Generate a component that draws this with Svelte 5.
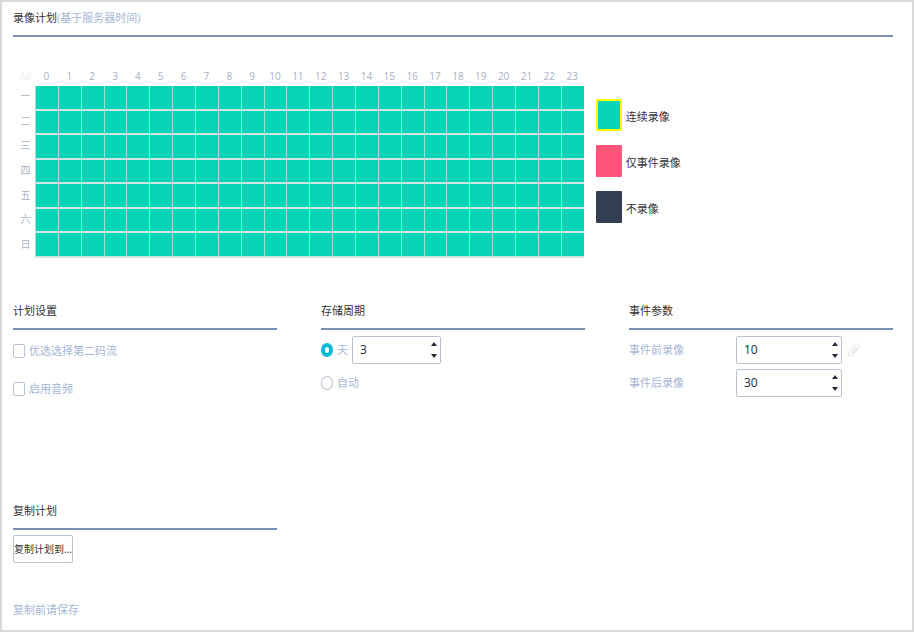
<script>
  const hours = Array.from({ length: 24 }, (_, i) => i);
  const days = ['一', '二', '三', '四', '五', '六', '日'];
  const modes = [
    { id: 'continuous', label: '连续录像' },
    { id: 'event', label: '仅事件录像' },
    { id: 'none', label: '不录像' }
  ];

  let mode = $state('continuous');
  let plan = $state(days.map(() => hours.map(() => 'continuous')));
  let secondStream = $state(false);
  let audio = $state(false);
  let retention = $state('days');
  let keepDays = $state(3);
  let before = $state(10);
  let after = $state(30);
</script>

{#snippet spinner(id, label, get, set)}
  <span class="spin">
    <input {id} type="number" aria-label={label} bind:value={get, set} />
    <span class="steps">
      <button type="button" aria-label="增加" onclick={() => set(get() + 1)}>
        <svg viewBox="0 0 6 4"><path d="M3 0 6 4H0z" /></svg>
      </button>
      <button type="button" aria-label="减少" onclick={() => set(get() - 1)}>
        <svg viewBox="0 0 6 4"><path d="M0 0H6L3 4z" /></svg>
      </button>
    </span>
  </span>
{/snippet}

<main>
  <h2>录像计划<small>(基于服务器时间)</small></h2>

  <section class="schedule">
    <div class="grid">
      <table>
        <thead>
          <tr>
            <th class="all">All</th>
            {#each hours as h}<th>{h}</th>{/each}
          </tr>
        </thead>
        <tbody>
          {#each days as day, d}
            <tr>
              <th>{day}</th>
              {#each hours as h}
                <td class={plan[d][h]}>
                  <button type="button" aria-label="{day} {h}" onclick={() => (plan[d][h] = mode)}></button>
                </td>
              {/each}
            </tr>
          {/each}
        </tbody>
      </table>
    </div>

    <div class="legend">
      {#each modes as m}
        <button type="button" class="mode" aria-pressed={mode === m.id} onclick={() => (mode = m.id)}>
          <span class="swatch {m.id}" class:selected={mode === m.id}></span>
          <span class="name">{m.label}</span>
        </button>
      {/each}
    </div>
  </section>

  <div class="columns settings">
    <section>
      <h2>计划设置</h2>
      <div class="checks">
        <label><input type="checkbox" bind:checked={secondStream} />优选选择第二码流</label>
        <label><input type="checkbox" bind:checked={audio} />启用音频</label>
      </div>
    </section>

    <section>
      <h2>存储周期</h2>
      <div class="rows">
        <div class="row">
          <label><input type="radio" value="days" bind:group={retention} />天</label>
          {@render spinner('keep', '天数', () => keepDays, (v) => (keepDays = v))}
        </div>
        <div class="row">
          <label><input type="radio" value="auto" bind:group={retention} />自动</label>
        </div>
      </div>
    </section>

    <section class="events">
      <h2>事件参数</h2>
      <div class="rows">
        <div class="row">
          <label for="before">事件前录像</label>
          {@render spinner('before', '事件前录像', () => before, (v) => (before = v))}
          <svg class="pencil" viewBox="0 0 12 14" aria-hidden="true">
            <path d="M1 13V8.500L7 1.200Q8 .3 9 1.200L10.700 3Q11.500 4 10.700 5L4.600 12.500z" />
            <path d="M3.500 8.600 7.300 4 8.800 5.500 5 10.200zM4.300 9.400 8 4.800" />
          </svg>
        </div>
        <div class="row">
          <label for="after">事件后录像</label>
          {@render spinner('after', '事件后录像', () => after, (v) => (after = v))}
        </div>
      </div>
    </section>
  </div>

  <div class="columns">
    <section>
      <h2>复制计划</h2>
      <button type="button" class="copy">复制计划到...</button>
      <p>复制前请保存</p>
    </section>
  </div>
</main>

<style>
  main {
    box-sizing: border-box;
    min-height: 100vh;
    padding: 6px 19px 8px 11px;
    border: 2px solid #d9d9d9;
    background: #fff;
    color: #333;
    font: 11px/20px "Open Sans", "Noto Sans CJK SC", sans-serif;
  }

  button,
  input {
    margin: 0;
    padding: 0;
    border: 0;
    background: none;
    color: inherit;
    font: inherit;
  }

  h2 {
    margin: 0;
    padding-bottom: 7px;
    border-bottom: 2px solid #7c90b6;
    font-size: 11px;
    font-weight: 400;
    line-height: 20px;
  }

  small {
    color: #a6b6d4;
    font-size: 11px;
  }

  .schedule {
    display: flex;
    gap: 12px;
    height: 264px;
    padding-top: 29px;
    box-sizing: border-box;
  }

  .grid {
    flex: 570;
  }

  table {
    width: 100%;
    height: 192px;
    table-layout: fixed;
    border-spacing: 0;
    color: #a9b1c2;
    font-size: 10px;
    line-height: 20px;
  }

  th {
    padding: 0;
    font-weight: 400;
  }

  thead th {
    height: 20px;
  }

  th:first-child {
    width: 22px;
    padding-left: 3px;
    box-sizing: border-box;
  }

  tbody th {
    padding-bottom: 4px;
  }

  thead .all {
    color: #eceef2;
  }

  td {
    padding: 0;
    border-left: 1px solid #a5ded3;
    border-bottom: 2px solid #cfe6e2;
  }

  td button {
    display: block;
    width: 100%;
    height: 22px;
  }

  .continuous {
    background: #06d6b7;
  }

  .event {
    background: #ff5579;
  }

  .none {
    background: #323f52;
  }

  td,
  .swatch {
    background-clip: border-box;
  }

  .legend {
    display: flex;
    flex: 297;
    flex-direction: column;
    align-items: flex-start;
    gap: 14px;
    padding-top: 33px;
  }

  .mode {
    display: flex;
    align-items: center;
    gap: 4px;
  }

  .name {
    padding-top: 4px;
  }

  .swatch {
    width: 26px;
    height: 32px;
    border-radius: 1px;
    box-sizing: border-box;
  }

  .selected {
    border: 2px solid #ff0;
  }

  .columns {
    display: grid;
    grid-template-columns: repeat(3, 1fr);
    gap: 44px;
  }

  .settings {
    min-height: 200px;
  }

  label,
  p {
    color: #a6b6d4;
  }

  .checks {
    display: flex;
    flex-direction: column;
    align-items: flex-start;
    gap: 18px;
    padding-top: 11px;
  }

  .checks label,
  .row label {
    display: flex;
    align-items: center;
    gap: 4px;
  }

  input[type="checkbox"],
  input[type="radio"] {
    width: 12px;
    height: 14px;
    border: 1px solid #bac3d1;
    border-radius: 2px;
    appearance: none;
    box-sizing: border-box;
  }

  input[type="radio"] {
    border-radius: 50%;
  }

  input[type="checkbox"]:checked {
    background: #00bcd8;
  }

  input[type="radio"]:checked {
    border: 4px solid #00bcd8;
  }

  .rows {
    display: flex;
    flex-direction: column;
    gap: 5px;
    padding-top: 6px;
  }

  .row {
    display: flex;
    align-items: center;
    gap: 4px;
    height: 28px;
  }

  .events .row label {
    width: 103px;
  }

  .spin {
    display: flex;
    width: 89px;
    height: 28px;
    border: 1px solid #bac3d1;
    border-radius: 2px;
    box-sizing: border-box;
    color: #222b38;
  }

  .events .spin {
    width: 106px;
  }

  .spin input {
    flex: 1;
    min-width: 0;
    padding-left: 7px;
    font-size: 12px;
    appearance: textfield;
  }

  .spin input::-webkit-inner-spin-button {
    appearance: none;
  }

  .steps {
    display: flex;
    flex-direction: column;
    justify-content: center;
    width: 12px;
  }

  .steps button {
    display: flex;
    align-items: center;
    justify-content: center;
    height: 12px;
  }

  .steps svg {
    width: 6px;
    height: 4px;
    fill: #222b38;
  }

  .pencil {
    width: 12px;
    height: 14px;
    margin-left: 2px;
    fill: none;
    stroke: #e4e4e4;
    stroke-width: 1;
  }

  .copy {
    height: 28px;
    margin-top: 5px;
    border: 1px solid #b9c6cf;
    border-radius: 2px;
    font-size: 10px;
    white-space: nowrap;
  }

  p {
    margin: 37px 0 0;
  }
</style>
